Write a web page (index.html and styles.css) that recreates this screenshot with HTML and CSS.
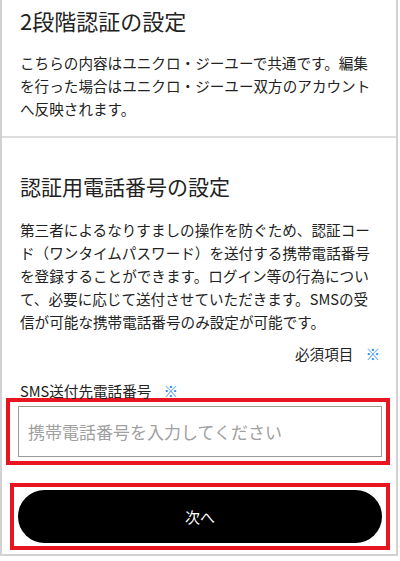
FILE: index.html
```html
<!DOCTYPE html>
<html lang="ja">
<head>
    <meta charset="UTF-8">
    <meta name="viewport" content="width=device-width, initial-scale=1.0">
    <title>2段階認証の設定</title>
    <link rel="stylesheet" href="styles.css">
</head>
<body>

<div class="frame">
    <section class="intro">
        <h1>2段階認証の設定</h1>
        <p class="text">こちらの内容はユニクロ・ジーユーで共通です。編集を行った場合はユニクロ・ジーユー双方のアカウントへ反映されます。</p>
    </section>

    <section class="phone">
        <h2>認証用電話番号の設定</h2>
        <p class="text">第三者によるなりすましの操作を防ぐため、認証コード（ワンタイムパスワード）を送付する携帯電話番号を登録することができます。ログイン等の行為について、必要に応じて送付させていただきます。SMSの受信が可能な携帯電話番号のみ設定が可能です。</p>

        <p class="required">必須項目<span class="mark">※</span></p>

        <form id="phoneForm">
            <label for="tel" class="label">SMS送付先電話番号<span class="mark">※</span></label>
            <div class="highlight highlight-input">
                <input type="tel" id="tel" name="tel" placeholder="携帯電話番号を入力してください">
            </div>
            <div class="highlight highlight-button">
                <button type="submit" class="next">次へ</button>
            </div>
        </form>
    </section>
</div>

</body>
</html>
```

FILE: styles.css
```css
body {
    margin: 0;
    padding: 0;
    background-color: #fff;
    color: #222;
    font-family: "Noto Sans CJK JP", "Noto Sans", sans-serif;
}

.frame {
    width: 398px;
    box-sizing: border-box;
    border: 2px solid #d2d2d2;
    border-top: none;
    padding-bottom: 4px;
}

h1, h2, p {
    margin: 0;
    font-weight: 400;
}

.intro {
    padding: 5px 18px 16px 18px;
    border-bottom: 2px solid #dedede;
}

h1 {
    font-size: 22px;
    line-height: 30px;
}

h2 {
    font-size: 21px;
    line-height: 30px;
}

.text {
    width: 352px;
    font-size: 14.6px;
    line-height: 23px;
    margin-top: 16px;
}

.phone {
    padding-top: 33px;
}

.phone h2,
.phone .text {
    margin-left: 18px;
}

.phone .text {
    margin-top: 17px;
}

.required {
    text-align: right;
    font-size: 14.6px;
    line-height: 23px;
    margin-top: 9px;
    padding-right: 16px;
}

.mark {
    color: #2b8be6;
    margin-left: 12px;
}

.label {
    display: block;
    margin: 18px 0 0 18px;
    font-size: 14.6px;
    line-height: 15px;
}

.highlight {
    border: 4px solid #e8141f;
    width: 384px;
    box-sizing: border-box;
}

.highlight-input {
    margin-left: 4px;
    padding: 4px 4px 4px 8px;
}

.highlight-button {
    margin: 18px 0 0 8px;
    width: 380px;
    padding: 3px 4px;
}

input[type="tel"] {
    display: block;
    width: 100%;
    height: 51px;
    box-sizing: border-box;
    border: 1.5px solid #9a9a9a;
    border-radius: 0;
    padding: 0 9px;
    font-size: 17px;
    font-family: "Noto Sans CJK JP", sans-serif;
    color: #222;
}

input[type="tel"]::placeholder {
    color: #a0a0a0;
}

.next {
    display: block;
    width: 100%;
    height: 53px;
    border: none;
    border-radius: 27px;
    background-color: #000;
    color: #fff;
    font-size: 15px;
    font-family: "Noto Sans CJK JP", sans-serif;
    cursor: pointer;
}
```
